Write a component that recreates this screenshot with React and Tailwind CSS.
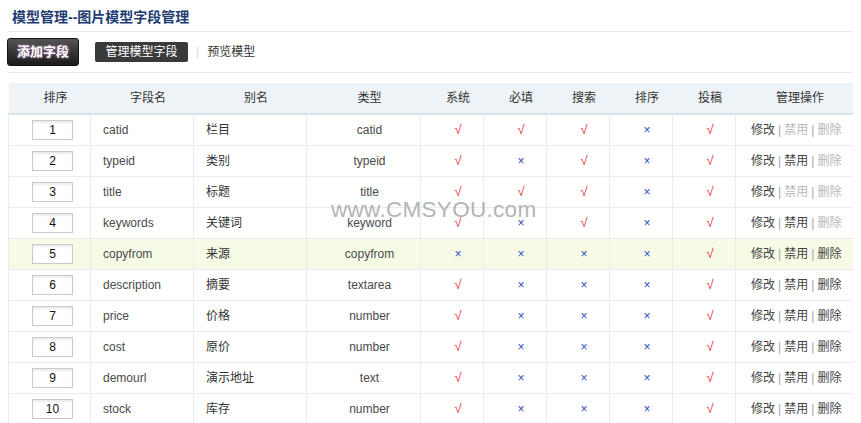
import React from 'react';

const ROWS = [
  { no: 1, name: 'catid', alias: '栏目', type: 'catid', flags: [1, 1, 1, 0, 1], ban: false, del: false },
  { no: 2, name: 'typeid', alias: '类别', type: 'typeid', flags: [1, 0, 1, 0, 1], ban: true, del: false },
  { no: 3, name: 'title', alias: '标题', type: 'title', flags: [1, 1, 1, 0, 1], ban: false, del: false },
  { no: 4, name: 'keywords', alias: '关键词', type: 'keyword', flags: [1, 0, 1, 0, 1], ban: true, del: false },
  { no: 5, name: 'copyfrom', alias: '来源', type: 'copyfrom', flags: [0, 0, 0, 0, 1], ban: true, del: true, hl: true },
  { no: 6, name: 'description', alias: '摘要', type: 'textarea', flags: [1, 0, 0, 0, 1], ban: true, del: true },
  { no: 7, name: 'price', alias: '价格', type: 'number', flags: [1, 0, 0, 0, 1], ban: true, del: true },
  { no: 8, name: 'cost', alias: '原价', type: 'number', flags: [1, 0, 0, 0, 1], ban: true, del: true },
  { no: 9, name: 'demourl', alias: '演示地址', type: 'text', flags: [1, 0, 0, 0, 1], ban: true, del: true },
  { no: 10, name: 'stock', alias: '库存', type: 'number', flags: [1, 0, 0, 0, 1], ban: true, del: true },
];

const HEADS = ['排序', '字段名', '别名', '类型', '系统', '必填', '搜索', '排序', '投稿', '管理操作'];
const WIDTHS = [82, 103, 113, 114, 63, 63, 63, 63, 63, 117];

function Flag({ on }) {
  return on
    ? <span className="text-[13px] text-[#e4323a]">√</span>
    : <span className="text-[12px] text-[#2f4fc4]">×</span>;
}

function Actions({ ban, del }) {
  return (
    <span className="whitespace-nowrap">
      <span className="text-[#444]">修改</span>
      <span className="mx-[3px] text-[#a0a8ad]">|</span>
      <span className={ban ? 'text-[#444]' : 'text-[#b8b8b8]'}>禁用</span>
      <span className="mx-[3px] text-[#a0a8ad]">|</span>
      <span className={del ? 'text-[#444]' : 'text-[#b8b8b8]'}>删除</span>
    </span>
  );
}

export default function App() {
  return (
    <div className="relative h-[423px] w-[861px] overflow-hidden bg-white text-[12px] text-[#4a4a4a]" style={{ fontFamily: '"Liberation Sans", "Noto Sans CJK SC", sans-serif' }}>
      <div className="mx-2 h-[32px] border-b border-[#e6e9ec] pl-1 pt-[7px] text-[14px] font-bold text-[#1f3d72]">模型管理--图片模型字段管理</div>

      <div className="mx-2 flex h-[41px] items-center border-b border-[#e6e9ec]">
        <button className="-ml-[1px] h-[28px] w-[72px] rounded-[3px] border border-[#111] bg-gradient-to-b from-[#555] to-[#1a1a1a] text-[13px] font-bold text-white [text-shadow:0_0_3px_#c08ac0]">添加字段</button>
        <span className="ml-[16px] flex h-[20px] w-[93px] items-center justify-center rounded-[2px] bg-[#3a3a3a] text-[12px] text-white">管理模型字段</span>
        <span className="ml-[8px] text-[#d6d6d6]">|</span>
        <span className="ml-[8px] text-[#333]">预览模型</span>
      </div>

      <table className="mx-2 mt-[10px] table-fixed border-collapse" style={{ width: 844 }}>
        <colgroup>
          {WIDTHS.map((w, i) => <col key={i} style={{ width: w }} />)}
        </colgroup>
        <thead>
          <tr className="h-[31px] bg-[#eef3f7]">
            {HEADS.map((h, i) => (
              <th key={i} className="border-b-2 border-[#dbe3ea] pl-3 text-center font-normal text-[#333]">{h}</th>
            ))}
          </tr>
        </thead>
        <tbody>
          {ROWS.map((r) => (
            <tr key={r.no} className={`h-[31px] ${r.hl ? 'bg-[#f6fbe6]' : 'bg-white'}`}>
              <td className="border border-t-0 border-[#e8ecee] pl-[6px] text-center">
                <span className="inline-flex h-[20px] w-[41px] items-center justify-center border border-[#cacaca] bg-white align-middle text-[12px] text-[#111] shadow-[inset_0_2px_2px_rgba(0,0,0,0.08)]">{r.no}</span>
              </td>
              <td className="border border-[#e8ecee] pl-3 text-left">{r.name}</td>
              <td className="border border-[#e8ecee] pl-3 text-left text-[#333]">{r.alias}</td>
              <td className="border border-[#e8ecee] pl-3 text-center">{r.type}</td>
              {r.flags.map((f, i) => (
                <td key={i} className="border border-[#e8ecee] pl-3 text-center"><Flag on={f} /></td>
              ))}
              <td className="border border-r-0 border-[#e8ecee] pl-[4px] text-center"><Actions ban={r.ban} del={r.del} /></td>
            </tr>
          ))}
        </tbody>
      </table>

      <div className="pointer-events-none absolute left-[331px] top-[193px] text-[22.5px] tracking-[0.3px] text-[#a3a3a3] opacity-80">www.CMSYOU.com</div>
    </div>
  );
}
